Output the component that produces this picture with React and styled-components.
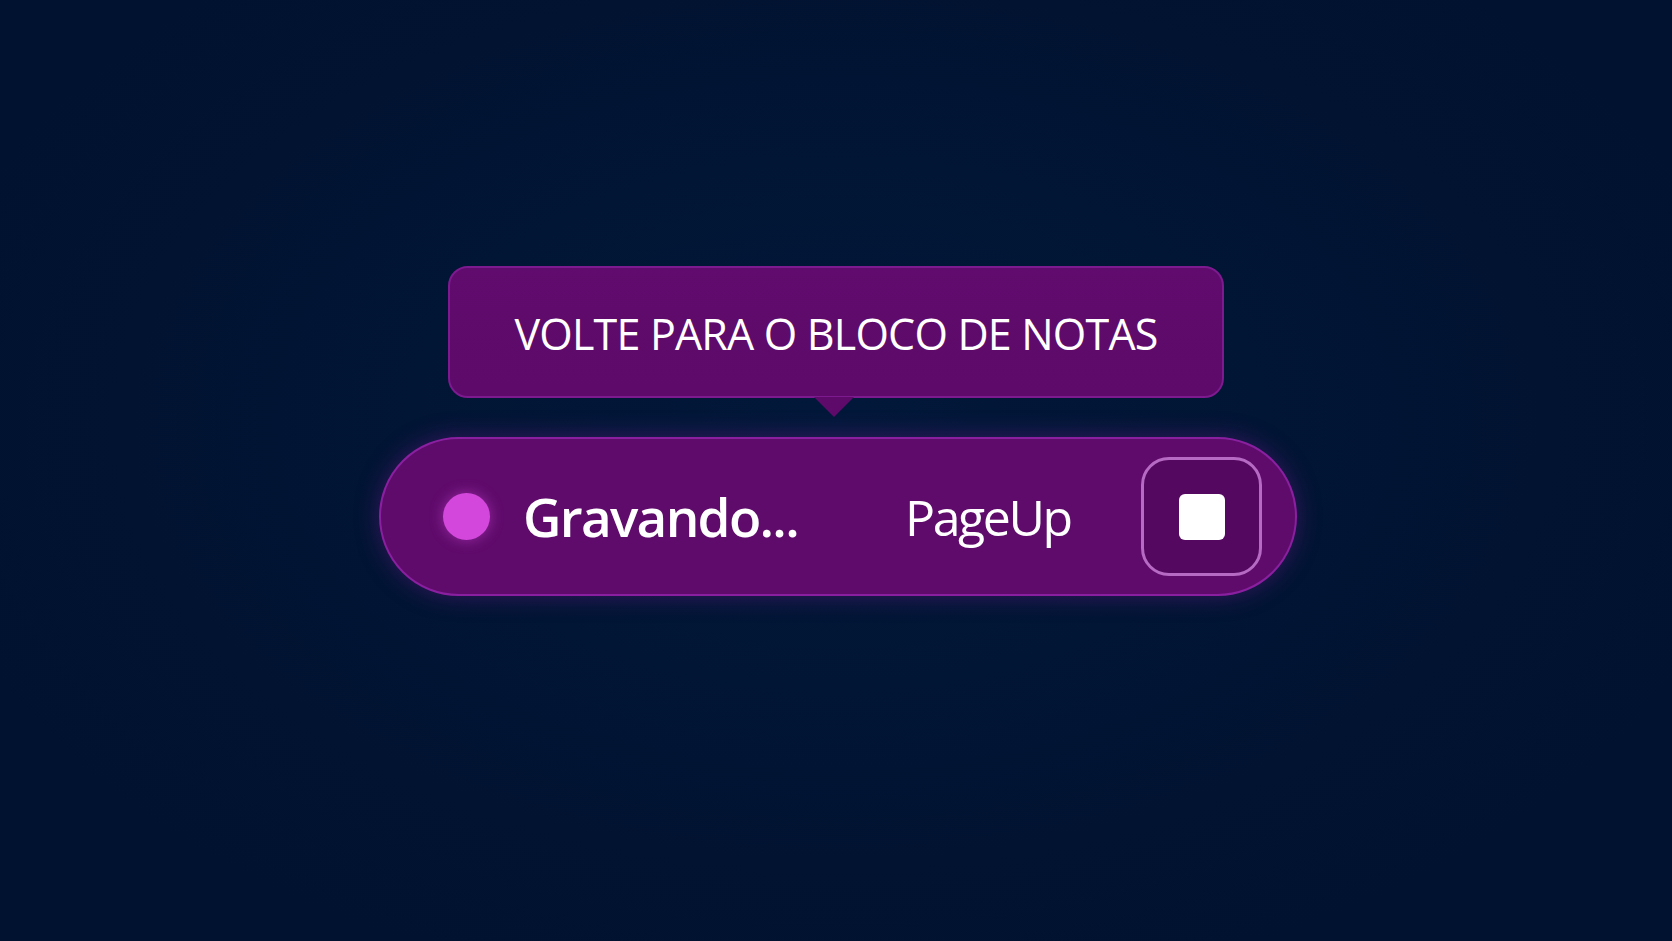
import styled, { createGlobalStyle } from 'styled-components';

const GlobalStyle = createGlobalStyle`
    html, body {
        margin: 0;
        padding: 0;
        background: #011331;
    }
    body {
        font-family: "Open Sans", "Noto Sans", sans-serif;
    }
`;

const Page = styled.div`
    width: 100vw;
    height: 100vh;
    box-sizing: border-box;
    padding-top: 266px;
    display: flex;
    flex-direction: column;
    align-items: center;
    background: radial-gradient(ellipse at 50% 45%, #02183a 0%, #011331 60%, #011130 100%);
`;

const Tooltip = styled.div`
    position: relative;
    width: 776px;
    height: 132px;
    box-sizing: border-box;
    display: flex;
    align-items: center;
    justify-content: center;
    background: linear-gradient(180deg, #600b6d 0%, #5d0a6a 100%);
    border: 2px solid #7e1a8f;
    border-radius: 20px;
    color: #ffffff;
    font-size: 43px;
    letter-spacing: -0.8px;
    padding-top: 3px;

    &::after {
        content: '';
        position: absolute;
        left: 50%;
        bottom: -21px;
        margin-left: -22px;
        width: 0;
        height: 0;
        border-left: 20px solid transparent;
        border-right: 20px solid transparent;
        border-top: 20px solid #5d0a6a;
    }
`;

const Bar = styled.div`
    margin-top: 39px;
    margin-left: 4px;
    width: 918px;
    height: 159px;
    box-sizing: border-box;
    display: flex;
    align-items: center;
    padding: 0 33px 0 62px;
    background: #5f0b6b;
    border: 2px solid #8a20a0;
    border-radius: 80px;
    box-shadow: 0 0 24px rgba(150, 30, 170, 0.35);
`;

const Dot = styled.span`
    flex: none;
    width: 47px;
    height: 47px;
    border-radius: 50%;
    background: #d447dc;
    box-shadow: 0 0 14px rgba(220, 80, 230, 0.45);
`;

const Status = styled.span`
    flex: none;
    width: 382px;
    margin-left: 33px;
    color: #ffffff;
    font-size: 53px;
    font-weight: 600;
    letter-spacing: -1.7px;
`;

const Key = styled.span`
    flex: none;
    color: #ffffff;
    font-size: 50px;
    letter-spacing: -2.4px;
`;

const StopButton = styled.button`
    margin-left: auto;
    flex: none;
    width: 121px;
    height: 119px;
    box-sizing: border-box;
    display: flex;
    align-items: center;
    justify-content: center;
    background: #54085f;
    border: 3px solid #b66ac4;
    border-radius: 28px;
    padding: 0;
    cursor: pointer;
`;

const StopIcon = styled.span`
    width: 46px;
    height: 46px;
    border-radius: 6px;
    background: #ffffff;
`;

export default function App() {
    return (
        <>
            <GlobalStyle />
            <Page>
                <Tooltip>VOLTE PARA O BLOCO DE NOTAS</Tooltip>
                <Bar>
                    <Dot />
                    <Status>Gravando...</Status>
                    <Key>PageUp</Key>
                    <StopButton aria-label="Parar">
                        <StopIcon />
                    </StopButton>
                </Bar>
            </Page>
        </>
    );
}
